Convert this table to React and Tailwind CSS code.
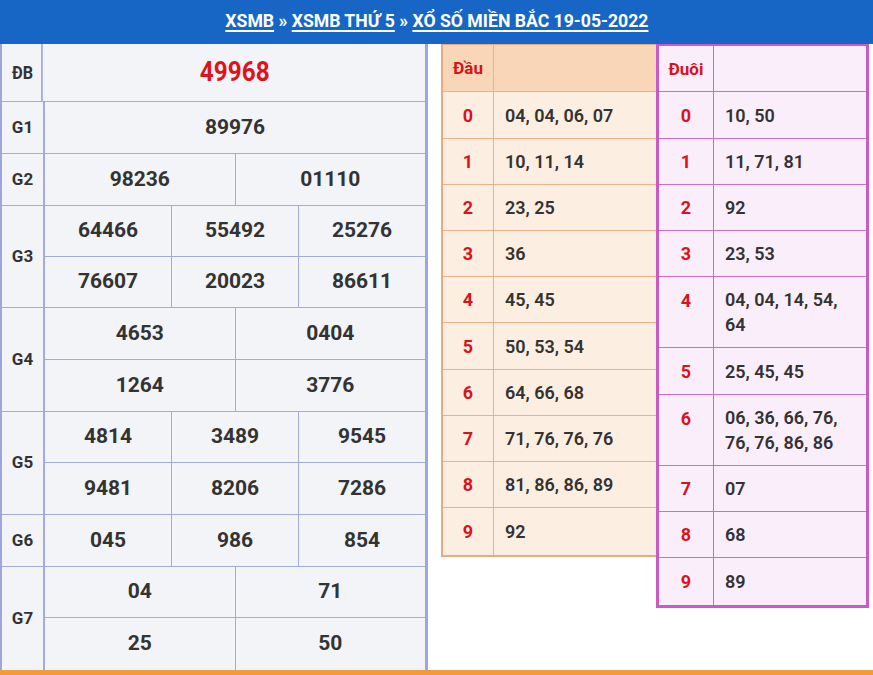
import React from 'react';

const font = { fontFamily: 'Roboto, "Noto Sans", sans-serif' };

// row heights include their own bottom border (border-box)
const groups = [
    { label: 'G1', rows: [['89976']], h: [51] },
    { label: 'G2', rows: [['98236', '01110']], h: [51] },
    { label: 'G3', rows: [['64466', '55492', '25276'], ['76607', '20023', '86611']], h: [51, 50] },
    { label: 'G4', rows: [['4653', '0404'], ['1264', '3776']], h: [52, 51] },
    { label: 'G5', rows: [['4814', '3489', '9545'], ['9481', '8206', '7286']], h: [51, 51] },
    { label: 'G6', rows: [['045', '986', '854']], h: [51] },
    { label: 'G7', rows: [['04', '71'], ['25', '50']], h: [51, 52] },
];

const dau = [
    ['0', '04, 04, 06, 07', 47],
    ['1', '10, 11, 14', 46],
    ['2', '23, 25', 46],
    ['3', '36', 46],
    ['4', '45, 45', 46],
    ['5', '50, 53, 54', 47],
    ['6', '64, 66, 68', 46],
    ['7', '71, 76, 76, 76', 46],
    ['8', '81, 86, 86, 89', 46],
    ['9', '92', 47],
];

const duoi = [
    ['0', '10, 50', 47],
    ['1', '11, 71, 81', 46],
    ['2', '92', 46],
    ['3', '23, 53', 46],
    ['4', '04, 04, 14, 54, 64', 71],
    ['5', '25, 45, 45', 47],
    ['6', '06, 36, 66, 76, 76, 76, 86, 86', 71],
    ['7', '07', 46],
    ['8', '68', 46],
    ['9', '89', 47],
];

function PrizeRow({ cells, h, last }) {
    return (
        <div
            className={`flex ${last ? '' : 'border-b border-[#a3abdc]'}`}
            style={{ height: h }}
        >
            {cells.map((n, i) => (
                <div
                    key={i}
                    className={`flex-1 flex items-center justify-center text-[21px] font-bold text-[#333] ${i < cells.length - 1 ? 'border-r border-[#a3abdc]' : ''}`}
                >
                    {n}
                </div>
            ))}
        </div>
    );
}

function ResultTable() {
    return (
        <div className="w-[428px] h-[626px] bg-[#f3f4f8] border-l-2 border-r-[3px] border-[#9ea7da]">
            <div className="flex h-[58px] border-b border-[#a3abdc]">
                <div className="w-[43px] border-r-2 border-[#a3abdc] flex items-center justify-center text-[18px] font-bold text-[#333] scale-x-90">
                    ĐB
                </div>
                <div className="flex-1 flex items-center justify-center">
                    <span className="text-[27px] font-bold text-[#e0131b] scale-x-90 inline-block">49968</span>
                </div>
            </div>
            {groups.map((g, gi) => (
                <div
                    key={g.label}
                    className={`flex ${gi < groups.length - 1 ? 'border-b border-[#a3abdc]' : ''}`}
                >
                    <div className="w-[43px] border-r-2 border-[#a3abdc] flex items-center justify-center text-[17px] font-bold text-[#333]">
                        {g.label}
                    </div>
                    <div className="flex-1 flex flex-col">
                        {g.rows.map((r, ri) => (
                            <PrizeRow key={ri} cells={r} h={g.h[ri]} last={ri === g.rows.length - 1} />
                        ))}
                    </div>
                </div>
            ))}
        </div>
    );
}

function DauTable() {
    return (
        <div className="w-[215px] self-start border-l-2 border-b-2 border-t border-[#e8aa7e] bg-[#fdeee2]">
            <div className="flex h-[47px] bg-[#f9d6b7] border-b border-[#eeb187]">
                <div className="w-[51px] border-r border-[#eeb187] flex items-center justify-center pt-[2px] text-[17px] font-bold text-[#d9121c]">
                    Đầu
                </div>
                <div className="flex-1" />
            </div>
            {dau.map(([d, v, h], i) => (
                <div
                    key={d}
                    className={`flex ${i < dau.length - 1 ? 'border-b border-[#eeb187]' : ''}`}
                    style={{ height: h }}
                >
                    <div className="w-[51px] border-r border-[#eeb187] flex items-center justify-center text-[18px] font-bold text-[#d9121c]">
                        {d}
                    </div>
                    <div className="flex-1 flex items-center pl-[11px] text-[18px] font-semibold text-[#333]">
                        {v}
                    </div>
                </div>
            ))}
        </div>
    );
}

function DuoiTable() {
    return (
        <div className="w-[213px] self-start border-[3px] border-t-2 border-[#c95ac6] bg-[#fbeefb]">
            <div className="flex h-[46px] border-b border-[#cf6bcc]">
                <div className="w-[55px] border-r border-[#cf6bcc] flex items-center justify-center pt-[2px] text-[17px] font-bold text-[#d9121c]">
                    Đuôi
                </div>
                <div className="flex-1" />
            </div>
            {duoi.map(([d, v, h], i) => (
                <div
                    key={d}
                    className={`flex ${i < duoi.length - 1 ? 'border-b border-[#cf6bcc]' : ''}`}
                    style={{ height: h }}
                >
                    <div
                        className={`w-[55px] border-r border-[#cf6bcc] flex justify-center text-[18px] font-bold text-[#d9121c] ${h > 50 ? 'items-start pt-[10px]' : 'items-center'}`}
                    >
                        {d}
                    </div>
                    <div
                        className={`flex-1 flex pl-[11px] pr-[12px] text-[18px] font-semibold text-[#333] leading-[25px] ${h > 50 ? 'items-start pt-[10px]' : 'items-center'}`}
                    >
                        {v}
                    </div>
                </div>
            ))}
        </div>
    );
}

export default function App() {
    return (
        <div className="w-[873px] h-[675px] bg-white overflow-hidden" style={font}>
            <div className="h-[44px] bg-[#1766c6] flex items-center justify-center pb-[4px]">
                <div className="text-white font-bold text-[18px] scale-x-[0.98] whitespace-nowrap">
                    <a href="#" className="underline decoration-[1.5px] underline-offset-[3px]">XSMB</a>
                    <span> » </span>
                    <a href="#" className="underline decoration-[1.5px] underline-offset-[3px]">XSMB THỨ 5</a>
                    <span> » </span>
                    <a href="#" className="underline decoration-[1.5px] underline-offset-[3px]">XỔ SỐ MIỀN BẮC 19-05-2022</a>
                </div>
            </div>
            <div className="flex h-[626px]">
                <ResultTable />
                <div className="flex ml-[13px]">
                    <DauTable />
                    <DuoiTable />
                </div>
            </div>
            <div className="h-[5px] bg-[#f39a3d]" />
        </div>
    );
}
